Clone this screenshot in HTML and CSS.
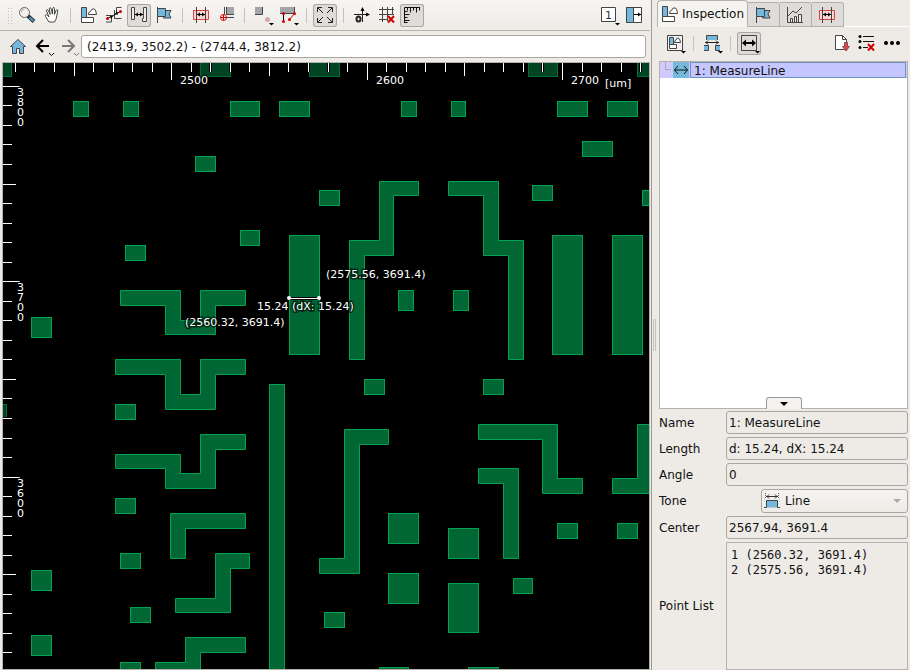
FILE: index.html
```html
<!DOCTYPE html>
<html lang="en">
<head>
  <meta charset="UTF-8">
  <title>Layout Inspection</title>
  <meta name="viewport" content="width=device-width, initial-scale=1.0">
  <link rel="stylesheet" href="styles.css">
</head>
<body>

<main class="viewer">
  <div class="toolbar">
    <span class="handle"></span>
    <button class="tool" aria-label="Zoom"><svg><circle cx="9.500" cy="8.500" r="5" fill="#f3f1ee" stroke="#666"/><path d="M6.500 8a3 3 0 0 1 3-3" stroke="#aaa"/><path d="M13 12l6 5.500" stroke="#333" stroke-width="4"/><path d="M14.500 13.500l4 3.500" stroke="#4a9bc9" stroke-width="2"/></svg></button>
    <button class="tool" aria-label="Pan"><svg><path d="M9 18L5.500 12.500c-1-2 1-2.500 2-1l1.500 1.500-2.500-6c-.5-1.500 1.200-2 1.800-.5l2 4-1-5.500c-.2-1.500 1.500-1.800 1.900-.3l1.200 5.300.3-5.500c.2-1.500 1.800-1.300 1.800 0l-.1 6 1.700-4c.6-1.500 2-1 1.700.5l-1.200 6c-.3 2-1.200 3.500-2.100 5z" fill="#fff"/></svg></button>
    <span class="sep"></span>
    <button class="tool" aria-label="Inspect shapes"><svg><use href="#i-shapes"/></svg></button>
    <button class="tool" aria-label="Measure points"><svg><path d="M19.500 3.500h-5v7M4 11.500h5.500v6.500H4M12.500 6v8.500h7"/><path d="M5.500 14.500L18.500 7.500" stroke="#000"/><path d="M8 11.500l3 .5-2 3zM16 10.500l-3-.5 2-3z" class="black"/><circle cx="5.500" cy="14.500" r="1.500" class="red"/><circle cx="18.500" cy="7.500" r="1.500" class="red"/></svg></button>
    <button class="tool active" aria-label="Measure distance"><svg><path d="M4.500 3.500h3v12h-3zM16.500 3.500h3v14h-4v-3h1z" fill="#eee"/><path d="M8 10.500h8" stroke="#000"/><use href="#i-heads"/></svg></button>
    <button class="tool" aria-label="Flags"><svg><use href="#i-flag"/></svg></button>
    <span class="sep"></span>
    <button class="tool" aria-label="Measure area"><svg><use href="#i-area"/></svg></button>
    <button class="tool" aria-label="Snap"><svg><path d="M12 3h8v8h-8z" class="gray"/><path d="M10.500 3v8M11.500 13.500H20M12.500 3v8M12 10.500h8"/><circle cx="9.500" cy="13.500" r="3" fill="#fff" stroke="#d00000"/><path d="M9.500 10.500v6M6.500 13.500h6" stroke="#d00000"/></svg></button>
    <span class="sep"></span>
    <button class="tool" aria-label="Snap point"><svg><path d="M4 3h8v8H4z" class="gray"/><path d="M11.500 3v7.500H4"/><circle cx="16.500" cy="15.500" r="2.500" fill="#d2a9a9" stroke="none"/><use href="#i-drop"/></svg></button>
    <button class="tool" aria-label="Edge mode"><svg><path d="M4 3h15v6H4z" class="gray"/><path d="M4 9.500h14.500V3"/><path d="M7.500 9.500v8" stroke="#000"/><path d="M13.500 15.500l5-6" stroke="#c00000"/><g class="red"><circle cx="7.500" cy="9.500" r="1.500"/><circle cx="7.500" cy="17.500" r="1.500"/><circle cx="13.500" cy="15.500" r="1.500"/><circle cx="18.500" cy="9.500" r="1.500"/></g><use href="#i-drop"/></svg></button>
    <span class="sep"></span>
    <button class="tool active" aria-label="Fit view"><svg><path d="M4.500 8V3.500H9M15 3.500h4.500V8M4.500 14v4.500H9M15 18.500h4.500V14M5 4l5 5M19 4l-5 5M5 18l5-5M19 18l-5-5" stroke="#222"/></svg></button>
    <span class="sep"></span>
    <button class="tool" aria-label="Set origin"><svg><path d="M4 10.500h15M12.500 4v14" stroke="#222"/><path d="M12.500 3l2 4h-4zM20 10.500l-4-2v4z" class="black"/><ellipse cx="8.500" cy="15" rx="2" ry="2.500" stroke="#222" stroke-width="2"/></svg></button>
    <button class="tool" aria-label="Clear grid"><svg><path d="M7.500 3v15M12.500 3v14M17.500 3v8M4 5.500h15M4 10.500h15M4 15.500h9"/><path d="M13 12l6 6.500M19 12l-6 6.500" stroke="#d00000" stroke-width="2"/></svg></button>
    <button class="tool active" aria-label="Rulers"><svg><path d="M4.500 19V3.500H20M7.500 3.500v3M10.500 3.500v5M13.500 3.500v3M16.500 3.500v5M19.500 3.500v3M4.500 7.500h3M4.500 10.500h5M4.500 13.500h3M4.500 16.500h5M4.500 18.500h3" stroke="#111"/></svg></button>
    <span class="spacer"></span>
    <button class="tool" aria-label="View 1"><svg><path d="M4.500 3.500h14v14h-14z" fill="#fff"/><text x="8" y="15" class="view-number">1</text><use href="#i-drop"/></svg></button>
    <button class="tool" aria-label="Toggle side panel"><svg><path d="M4.500 3.500h15v15h-15z" fill="#fff"/><path d="M4.500 3.500h7v15h-7z" class="blue"/><path d="M12 10.500h7" stroke="#000"/><path d="M16 8.500l3 2-3 2z" class="black"/></svg></button>
  </div>

  <div class="toolbar nav">
    <button class="tool" aria-label="Home"><svg><path d="M6.500 18.500v-7h-2l7.500-7 7.500 7h-2v7h-4v-5h-3v5z" class="blue"/></svg></button>
    <button class="tool" aria-label="Back"><svg><path d="M12 5l-6 6 6 6M6 11h12" stroke="#000" stroke-width="2"/><path d="M18 18l2.500 2.500L23 18" stroke="#000"/></svg></button>
    <button class="tool" aria-label="Forward"><svg><path d="M12 5l6 6-6 6M18 11H6" stroke="#777" stroke-width="2"/><path d="M18 18l2.500 2.500L23 18" stroke="#777"/></svg></button>
    <input class="field range" type="text" aria-label="Visible range" value="(2413.9, 3502.2) - (2744.4, 3812.2)">
  </div>

  <div class="canvas">
    <svg id="layout" role="img" aria-label="Layout view">
      <g transform="translate(-3 -63)">
        <g class="shape" transform="translate(.5 .5)">
          <rect x="73" y="101" width="15" height="15"/>
          <rect x="123" y="101" width="15" height="15"/>
          <rect x="230" y="101" width="29" height="15"/>
          <rect x="279" y="101" width="30" height="15"/>
          <rect x="401" y="101" width="15" height="15"/>
          <rect x="451" y="101" width="14" height="15"/>
          <rect x="557" y="101" width="30" height="15"/>
          <rect x="607" y="101" width="30" height="15"/>
          <rect x="582" y="141" width="30" height="15"/>
          <rect x="195" y="156" width="20" height="15"/>
          <rect x="532" y="185" width="20" height="15"/>
          <rect x="319" y="190" width="20" height="15"/>
          <rect x="642" y="190" width="20" height="15"/>
          <rect x="240" y="230" width="19" height="15"/>
          <rect x="125" y="245" width="20" height="15"/>
          <rect x="289" y="235" width="30" height="119"/>
          <rect x="552" y="235" width="30" height="119"/>
          <rect x="612" y="235" width="30" height="119"/>
          <rect x="398" y="290" width="15" height="20"/>
          <rect x="453" y="290" width="15" height="20"/>
          <rect x="31" y="317" width="20" height="20"/>
          <rect x="364" y="379" width="20" height="15"/>
          <rect x="483" y="379" width="20" height="15"/>
          <rect x="269" y="384" width="15" height="320"/>
          <rect x="115" y="404" width="20" height="15"/>
          <rect x="115" y="498" width="20" height="15"/>
          <rect x="120" y="553" width="20" height="15"/>
          <rect x="31" y="570" width="20" height="20"/>
          <rect x="130" y="607" width="20" height="15"/>
          <rect x="31" y="635" width="20" height="20"/>
          <rect x="120" y="662" width="20" height="20"/>
          <rect x="324" y="612" width="20" height="15"/>
          <rect x="388" y="513" width="30" height="30"/>
          <rect x="388" y="573" width="30" height="30"/>
          <rect x="448" y="528" width="30" height="30"/>
          <rect x="448" y="583" width="30" height="49"/>
          <rect x="557" y="523" width="20" height="15"/>
          <rect x="617" y="523" width="20" height="15"/>
          <rect x="513" y="578" width="19" height="15"/>
          <rect x="379" y="667" width="29" height="15"/>
          <rect x="468" y="667" width="30" height="15"/>
          <polygon points="120,290 180,290 180,320 200,320 200,290 245,290 245,305 215,305 215,334 165,334 165,305 120,305"/>
          <polygon points="115,359 180,359 180,394 200,394 200,359 245,359 245,374 215,374 215,409 165,409 165,374 115,374"/>
          <polygon points="115,454 180,454 180,473 200,473 200,434 245,434 245,449 215,449 215,488 165,488 165,468 115,468"/>
          <polygon points="170,513 245,513 245,528 185,528 185,558 170,558"/>
          <polygon points="215,553 249,553 249,568 230,568 230,612 175,612 175,598 215,598"/>
          <polygon points="185,637 245,637 245,652 200,652 200,690 155,690 155,662 185,662"/>
          <polygon points="344,429 388,429 388,444 359,444 359,573 319,573 319,558 344,558"/>
          <polygon points="478,424 557,424 557,478 582,478 582,493 542,493 542,439 478,439"/>
          <polygon points="478,468 518,468 518,558 503,558 503,483 478,483"/>
          <polygon points="637,424 660,424 660,493 612,493 612,478 637,478"/>
          <polygon points="379,181 418,181 418,195 393,195 393,255 364,255 364,359 349,359 349,240 379,240"/>
          <polygon points="448,181 498,181 498,240 523,240 523,359 508,359 508,255 483,255 483,195 448,195"/>
        </g>
        <!-- shapes under the ruler bands -->
        <g class="shape dim" transform="translate(.5 .5)">
          <rect x="-8" y="58" width="19" height="18"/>
          <rect x="200" y="58" width="30" height="18"/>
          <rect x="309" y="58" width="30" height="18"/>
          <rect x="528" y="58" width="29" height="18"/>
          <rect x="637" y="58" width="30" height="18"/>
          <rect x="-8" y="404" width="14" height="14"/>
        </g>
        <path class="tick-halo" id="halo"/>
        <path class="tick" id="ticks"/>
        <g id="ruler-labels"></g>
        <text x="605" y="87">[um]</text>

        <path d="M289 298.500h31" stroke="#000" stroke-width="3"/>
        <path d="M289 298.500h31" stroke="#fff"/>
        <circle cx="289" cy="298" r="2" fill="#fff" stroke="none"/>
        <circle cx="319" cy="298" r="2" fill="#fff" stroke="none"/>
        <text x="326" y="278">(2575.56, 3691.4)</text>
        <text x="257" y="310">15.24 (dX: 15.24)</text>
        <text x="185" y="326">(2560.32, 3691.4)</text>
      </g>
    </svg>
  </div>
</main>

<div class="splitter"><span class="grip"></span></div>

<aside class="panel">
  <div class="tabs" role="tablist">
    <button class="tab current" role="tab" aria-selected="true"><svg><use href="#i-shapes"/></svg>Inspection</button>
    <button class="tab" role="tab" aria-label="Flags"><svg><use href="#i-flag"/></svg></button>
    <button class="tab" role="tab" aria-label="Charts"><svg><path d="M4.500 3v15.500H20"/><path d="M7.500 14.500h2v4h-2zM11.500 12.500h2v6h-2zM15.500 10.500h3v8h-3z" fill="#eee"/><path d="M5 12l5-5 3 2 6-6"/></svg></button>
    <button class="tab" role="tab" aria-label="Areas"><svg><use href="#i-area"/></svg></button>
  </div>
  <div class="toolbar panel-tools">
    <button class="tool" aria-label="Shape filter"><svg><path d="M4.500 3.500h15v15h-15z" fill="#f3f1ee"/><path d="M6.500 5.500h4v7h-4z" class="blue"/><path d="M6.500 12.500h7v4h-7zM11.500 10.500q0-2 1.500-2.500 1-3 3-1.500 1 1 1.500 4z" fill="#fff"/><use href="#i-drop"/></svg></button>
    <span class="sep"></span>
    <button class="tool" aria-label="Tone"><svg><path d="M6.500 8V3.500h11V8" class="blue"/><path d="M4 13.500h4.500v5H4zM15.500 13.500H20v5h-4.500z" fill="#76b8dc" stroke="none"/><path d="M4 13.500h4.500v5H4M20 13.500h-4.500v5H20"/><path d="M5 10.500h14M8 8.500l-2 2 2 2M16 8.500l2 2-2 2" stroke="#222"/><use href="#i-drop"/></svg></button>
    <span class="sep"></span>
    <button class="tool active" aria-label="Line style"><svg><path d="M4.500 3.500h15v15h-15z"/><path d="M7 11h10" stroke="#000" stroke-width="2"/><path d="M9 7.500v7L5 11zM15 7.500v7l4-3.500z" class="black"/><use href="#i-drop"/></svg></button>
    <span class="spacer"></span>
    <button class="tool" aria-label="Export"><svg><path d="M5.500 3.500h7l4 4v10h-11zM12.500 3.500v4h4" fill="#fff"/><path d="M14.500 10.500h3v4h2L16 19l-3.500-4.500h2z" fill="#d9474a" stroke="#8f4a4a"/></svg></button>
    <button class="tool" aria-label="Clear list"><svg><path d="M8 4.500h11M8 9.500h11M8 15.500h5" stroke="#111"/><g class="black"><circle cx="5" cy="4.500" r="1.500"/><circle cx="5" cy="9.500" r="1.500"/><circle cx="5" cy="15.500" r="1.500"/></g><path d="M13 12l6 6.500M19 12l-6 6.500" stroke="#d00000" stroke-width="2"/></svg></button>
    <button class="tool" aria-label="More"><svg class="black"><circle cx="6" cy="11" r="2"/><circle cx="12" cy="11" r="2"/><circle cx="18" cy="11" r="2"/></svg></button>
  </div>

  <div class="tree">
    <ul>
      <li>
        <svg class="branch"><path d="M5.500 0v7.500H11" stroke="#aaa"/></svg>
        <svg class="item-icon"><path d="M1.500 8h13M5 4L1.500 8 5 12M11 4l3.500 4-3.500 4" stroke="#111"/></svg>
        <span>1: MeasureLine</span>
      </li>
    </ul>
    <button class="collapse" aria-label="Collapse"><svg><path d="M0 0h8L4 4z" class="black"/></svg></button>
  </div>

  <form class="props">
    <label for="name">Name</label>
    <input class="field" id="name" type="text" value="1: MeasureLine" readonly>
    <label for="length">Length</label>
    <input class="field" id="length" type="text" value="d: 15.24, dX: 15.24" readonly>
    <label for="angle">Angle</label>
    <input class="field" id="angle" type="text" value="0" readonly>
    <label for="tone">Tone</label>
    <div class="select-box">
      <svg class="tone-icon"><path d="M0 14.500h2.500v-7h11v7H16" class="blue"/><path d="M2 3.500h12M5 1.500l-2 2 2 2M11 1.500l2 2-2 2" stroke="#333"/><path d="M1.500 0v6M14.500 0v6" stroke="#555" stroke-dasharray="1 1"/></svg>
      <select id="tone"><option>Line</option></select>
      <svg class="select-arrow"><path d="M0 0h8L4 4z" fill="#aaa" stroke="none"/></svg>
    </div>
    <label for="center">Center</label>
    <input class="field" id="center" type="text" value="2567.94, 3691.4" readonly>
    <label for="points">Point List</label>
    <textarea class="points" id="points" readonly>1 (2560.32, 3691.4)
2 (2575.56, 3691.4)</textarea>
  </form>
</aside>

<svg class="defs">
  <defs>
    <g id="i-shapes"><path d="M4.500 3.500h5v10h-5z" class="blue"/><path d="M4.500 13.500h12v5h-12z" fill="#fff"/><path d="M11.500 10.500q0-3 2-3 1-3.500 4-2.500 1.500 1 2 5.500z" fill="#fff"/></g>
    <g id="i-flag"><path d="M5.500 3v16"/><path d="M11.500 6.500h7.500l-2 3.500 2 4h-7.500z" class="blue"/><path d="M5.500 4.500h8v8h-8z" class="blue"/></g>
    <g id="i-area"><path d="M4.500 6.500h15v9h-15z" fill="#f6d5d5" stroke="#dc4040"/><path d="M7.500 3v16M16.500 3v16"/><path d="M8 10.500h8" stroke="#000"/><use href="#i-heads"/></g>
    <path id="i-heads" d="M11 8.500v4l-3-2zM13 8.500v4l3-2z" class="black"/>
    <path id="i-drop" d="M18 19h5l-2.500 2.500z" class="black"/>
  </defs>
</svg>

<script>
const scale = 19.54;      // px per 10 um
const x2500 = 171.2;
const y3700 = 281.2;

function tickLength(k) {
  return k % 10 === 0 ? 17 : k % 5 === 0 ? 13 : 9;
}

function drawRulers() {
  const view = document.getElementById("layout").getBoundingClientRect();
  let d = "";
  let labels = "";
  for (let k = -8; x2500 + k * scale < view.right; k++) {
    const x = Math.round(x2500 + k * scale);
    d += `M${x + 0.5} 63v${tickLength(k)}`;
    if (k % 10 === 0) labels += `<text x="${x + 9}" y="84">${2500 + k * 10}</text>`;
  }
  for (let k = -11; y3700 + k * scale < view.bottom; k++) {
    const y = Math.round(y3700 + k * scale);
    if (y < 80) continue;
    d += `M3 ${y + 0.5}h${tickLength(k)}`;
    if (k % 10 === 0) {
      // one digit per line
      const digits = String(3700 - k * 10).split("");
      labels += `<text>${digits.map((c, i) => `<tspan x="17" y="${y + 10 + i * 10}">${c}</tspan>`).join("")}</text>`;
    }
  }
  document.getElementById("halo").setAttribute("d", d);
  document.getElementById("ticks").setAttribute("d", d);
  document.getElementById("ruler-labels").innerHTML = labels;
}

drawRulers();
window.addEventListener("resize", drawRulers);
</script>

</body>
</html>
```
FILE: styles.css
```css
:root {
  --bg: #eeebe7;
  --line: #b5b2ae;
  --dark-line: #9c9a96;
  --blue: #76b8dc;
  --fill: #006633;
  --edge: #00a352;
}
* {
  box-sizing: border-box;
}
body {
  margin: 0;
  height: 100vh;
  display: grid;
  grid-template-columns: 1fr 7px 253px;
  background: var(--bg);
  color: #111;
  font: 12px "DejaVu Sans", sans-serif;
  overflow: hidden;
}
button, input, select {
  font: inherit;
  color: inherit;
}
svg {
  fill: none;
  stroke: #444;
  display: block;
}
.blue { fill: var(--blue); }
.gray { fill: #a3a5a9; stroke: none; }
.red { fill: #d00000; stroke: none; }
.black { fill: #000; stroke: none; }
.defs {
  position: absolute;
  width: 0;
  height: 0;
}
.viewer {
  display: flex;
  flex-direction: column;
  min-width: 0;
}

/* toolbars */
.toolbar {
  display: flex;
  align-items: center;
  gap: 1px;
  height: 31px;
  padding: 0 4px 0 7px;
  background: linear-gradient(#f7f5f2, #eeebe7);
  border-bottom: 1px solid var(--line);
}
.toolbar.nav {
  padding-left: 6px;
  background: var(--bg);
  border-bottom: 0;
}
.handle {
  width: 5px;
  height: 17px;
  margin-right: 2px;
  background: radial-gradient(circle, #c4c1bd 1px, transparent 1px) 0 0 / 3px 3px;
}
.tool {
  width: 24px;
  height: 23px;
  padding: 0;
  border: 0;
  border-radius: 3px;
  background: none;
}
.tool.active {
  background: #dedbd8;
  box-shadow: inset 0 0 0 1px #aaa7a3;
}
.tool svg {
  width: 24px;
  height: 23px;
}
.view-number {
  font-size: 11px;
  fill: #333;
  stroke: none;
}
.sep {
  width: 1px;
  height: 15px;
  margin: 0 5px;
  background: #c4c1bd;
}
.spacer {
  flex: 1;
}
.field {
  width: 100%;
  min-width: 0;
  height: 23px;
  padding: 0 2px;
  border: 1px solid #aaa7a3;
  border-radius: 3px;
  background: var(--bg);
}
.field.range {
  flex: 1;
  padding: 0 5px;
  background: #fff;
}

/* layout view */
.canvas {
  flex: 1;
  min-height: 0;
  margin-left: 2px;
  border: 1px solid var(--line);
  background: #000;
}
.canvas svg {
  width: 100%;
  height: 100%;
}
.canvas text {
  font-size: 11px;
  fill: #fff;
  stroke: #000;
  stroke-opacity: .6;
  stroke-width: 3px;
  paint-order: stroke;
}
.shape {
  fill: var(--fill);
  stroke: var(--edge);
}
.shape.dim {
  fill: #004424;
  stroke: #006c38;
}
.tick {
  stroke: #fff;
}
.tick-halo {
  stroke: #000;
  stroke-width: 3px;
}

.splitter {
  display: flex;
  align-items: center;
  margin-left: 1px;
  padding-left: 1px;
  border-left: 1px solid var(--dark-line);
}
.grip {
  width: 3px;
  height: 32px;
  border: solid #c4c1bd;
  border-width: 0 1px;
}

/* side panel */
.panel {
  display: flex;
  flex-direction: column;
  min-width: 0;
}
.tabs {
  display: flex;
  align-items: flex-end;
  height: 27px;
  box-shadow: inset 0 -1px #fff;
}
.tab {
  width: 32px;
  height: 25px;
  padding: 0 3px;
  border: 1px solid var(--line);
  border-left: 0;
  border-radius: 0 3px 0 0;
  background: #dedbd8;
}
.tab svg {
  width: 24px;
  height: 22px;
}
.tab.current {
  display: flex;
  align-items: center;
  width: 91px;
  height: 27px;
  padding: 0;
  border-left: 1px solid var(--line);
  border-bottom: 0;
  border-radius: 4px 4px 0 0;
  background: #f5f3f0;
}
.toolbar.panel-tools {
  height: 34px;
  padding: 0 6px 2px;
  background: var(--bg);
  border: 0;
}
.tree {
  flex: 1;
  display: flex;
  flex-direction: column;
  justify-content: space-between;
  align-items: center;
  min-height: 40px;
  margin: 0 2px;
  border: 1px solid var(--line);
  background: #fff;
}
.tree ul {
  width: 100%;
  margin: 0;
  padding: 0;
  list-style: none;
}
.tree li {
  display: flex;
  height: 16px;
  padding-right: 1px;
  background: #cfcbff;
}
.branch {
  width: 13px;
  height: 16px;
}
.item-icon {
  width: 16px;
  height: 16px;
  margin-right: 1px;
  background: var(--blue);
}
.tree span {
  flex: 1;
  padding-left: 3px;
  border: 1px solid #7190c0;
  background: #c3c6ff;
  line-height: 16px;
}
.collapse {
  display: flex;
  justify-content: center;
  align-items: center;
  width: 36px;
  height: 12px;
  margin-bottom: -1px;
  padding: 0;
  border: 1px solid var(--dark-line);
  border-bottom: 0;
  border-radius: 3px 3px 0 0;
  background: #f5f3f0;
}
.collapse svg {
  width: 8px;
  height: 4px;
}
.props {
  display: grid;
  grid-template-columns: 64px 1fr;
  align-items: center;
  gap: 3px;
  padding: 2px 2px 0;
}
.select-box {
  position: relative;
  width: 147px;
  height: 24px;
  justify-self: end;
}
.select-box select {
  width: 100%;
  height: 100%;
  padding: 0 23px;
  border: 1px solid #aaa7a3;
  border-radius: 3px;
  background: linear-gradient(#f5f3f0, #eeebe7);
  appearance: none;
}
/* icon and arrow lie over the select */
.tone-icon, .select-arrow {
  position: absolute;
  pointer-events: none;
}
.tone-icon {
  left: 3px;
  top: 4px;
  width: 17px;
  height: 16px;
}
.select-arrow {
  right: 7px;
  top: 10px;
  width: 8px;
  height: 4px;
}
.points {
  height: 128px;
  padding: 5px 4px;
  border: 1px solid var(--line);
  background: var(--bg);
  color: inherit;
  font: 12px/15px "DejaVu Sans Mono", monospace;
  resize: none;
}
```
